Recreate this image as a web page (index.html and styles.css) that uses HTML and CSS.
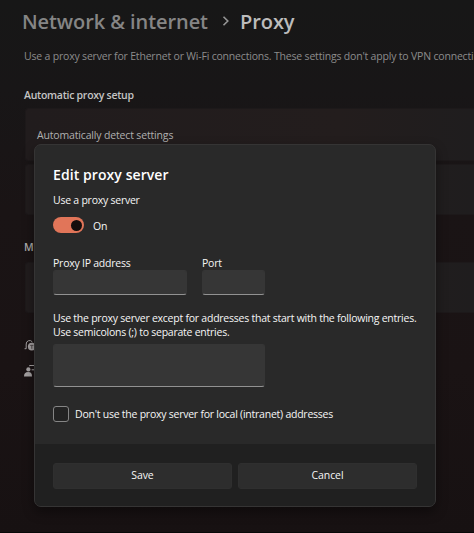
FILE: index.html
```
<!DOCTYPE html>
<html lang="en">
<head>
<meta charset="utf-8">
<title>Proxy</title>
<link rel="stylesheet" href="styles.css">
</head>
<body>
<main class="page">
  <h1 class="crumbs"><span class="parent">Network &amp; internet</span><svg class="chevron" viewBox="0 0 8 12"><path d="M1.5 1.8 5.8 6 1.5 10.2"/></svg><span class="current">Proxy</span></h1>
  <p class="intro">Use a proxy server for Ethernet or Wi-Fi connections. These settings don't apply to VPN connecti</p>
  <h2 class="section auto">Automatic proxy setup</h2>
  <div class="card detect"><span>Automatically detect settings</span></div>
  <div class="card script"></div>
  <h2 class="section manual">M</h2>
  <div class="card manual-card"></div>
  <div class="links">
    <svg class="link-icon" viewBox="0 0 14 14"><path class="line" d="M.6 9.7h1.6V5A3.4 3.4 0 0 1 8.4 3"/><circle cx="7.8" cy="7.6" r="3.9"/><path class="mark" d="M6.2 6.4h3.2M7.8 6.4v3.4"/></svg>
    <svg class="link-icon" viewBox="0 0 14 14"><circle cx="4.4" cy="4.4" r="2.1"/><path d="M0 11.6c0-3 1.2-4.5 4.2-4.5S8 8.6 8 11.6z"/><path class="line" d="M5.5 1.2V.5H12M7.6 4.8h4"/></svg>
  </div>
</main>
<section class="dialog" role="dialog">
  <div class="content">
    <h2 class="title">Edit proxy server</h2>
    <div class="label use">Use a proxy server</div>
    <div class="switch-row"><span class="switch"><span class="knob"></span></span><span class="on">On</span></div>
    <div class="fields">
      <div class="field address"><label>Proxy IP address</label><div class="input"></div></div>
      <div class="field port"><label>Port</label><div class="input"></div></div>
    </div>
    <p class="help">Use the proxy server except for addresses that start with the following entries.<br>Use semicolons (;) to separate entries.</p>
    <div class="input area"></div>
    <div class="check-row"><span class="check"></span><span class="check-text">Don't use the proxy server for local (intranet) addresses</span></div>
  </div>
  <footer class="footer"><div class="button"><span>Save</span></div><div class="button"><span>Cancel</span></div></footer>
</section>
</body>
</html>
```
FILE: styles.css
```
* { box-sizing: border-box; }
body {
  margin: 0;
  width: 474px;
  height: 533px;
  overflow: hidden;
  position: relative;
  background: linear-gradient(180deg, #171717 0, #181617 90px, #1a1415 210px, #1a1314 370px, #171112 532px, #080808 532px);
  font-family: "Open Sans", "Noto Sans", sans-serif;
  font-size: 10.5px;
  letter-spacing: -0.24px;
  color: #f6f6f6;
}
h1, h2, p { margin: 0; font-weight: 400; }
.page { height: 533px; padding: 7px 0 0 24px; overflow: hidden; white-space: nowrap; }
.crumbs { display: flex; align-items: center; height: 28px; margin-left: -2px; font-size: 20px; font-weight: 600; line-height: 29px; letter-spacing: -0.08px; color: #858585; }
.parent { width: 187px; }
.chevron { width: 8px; height: 12px; margin-left: 13px; fill: none; stroke: #969696; stroke-width: 1.6; }
.current { margin-left: 10px; color: #bcbcbc; }
.intro { height: 16px; margin-top: 13px; line-height: 16px; letter-spacing: -0.19px; color: #8c8c8c; }
.section { height: 16px; font-size: 10.5px; font-weight: 600; line-height: 16px; letter-spacing: -0.27px; color: #c4c4c4; }
.auto { margin-top: 23px; }
.card { margin-left: 1px; background: linear-gradient(90deg, #211c1d, #231d1d 70%, #1f1d1e); border: 1px solid #1d191a; border-right: 0; border-radius: 3px 0 0 3px; }
.detect { height: 53px; margin-top: 5px; padding: 18px 0 0 11px; line-height: 16px; letter-spacing: -0.16px; color: #b0b0b0; }
.script { height: 51px; margin-top: 3px; }
.manual { margin-top: 24px; color: #aaa; }
.manual-card { height: 51px; margin-top: 7px; }
.links { display: flex; flex-direction: column; gap: 12px; margin-top: 26px; }
.link-icon { width: 14px; height: 14px; fill: #a5a1a2; }
.link-icon .line { fill: none; stroke: #a5a1a2; stroke-width: 1; }
.link-icon .mark { fill: none; stroke: #504a4b; stroke-width: 1; }
.dialog { position: absolute; left: 34px; top: 144px; width: 402px; height: 363px; overflow: hidden; border: 1px solid #353434; border-radius: 7px; background: #292929; box-shadow: 0 5px 12px rgba(0, 0, 0, .4); white-space: nowrap; }
.content { height: 299px; padding: 19px 18px 0; }
.title { height: 20px; font-size: 14px; font-weight: 600; line-height: 21px; letter-spacing: 0.08px; color: #fff; }
.label { line-height: 16px; }
.use { margin-top: 8px; }
.switch-row { display: flex; align-items: center; gap: 9px; height: 16px; margin-top: 9px; }
.switch { display: flex; align-items: center; justify-content: flex-end; width: 31px; height: 16px; padding-right: 2px; border-radius: 8px; background: #e17559; }
.knob { width: 11px; height: 11px; border-radius: 50%; background: #130e0d; }
.on { line-height: 16px; padding-top: 1px; }
.fields { display: flex; gap: 15px; margin-top: 23px; }
.field label { display: block; height: 14px; line-height: 14px; }
.address { width: 134px; }
.port { width: 63px; }
.input { height: 25px; border-radius: 3px; background: #363636; border: 1px solid #363636; border-bottom-color: #929292; }
.help { height: 28px; margin-top: 16px; line-height: 14px; }
.area { width: 212px; height: 43px; margin-top: 5px; }
.check-row { display: flex; align-items: center; height: 16px; margin-top: 19px; }
.check { width: 16px; height: 16px; margin-right: 6px; border: 1px solid #858585; border-radius: 3px; background: #232323; }
.footer { display: flex; gap: 6px; height: 62px; padding: 19px 18px 17px; background: #202020; }
.button { flex: 1; height: 26px; border: 1px solid #2f2f2f; border-radius: 3px; background: #2d2d2d; line-height: 23px; letter-spacing: -0.1px; text-align: center; }
```
